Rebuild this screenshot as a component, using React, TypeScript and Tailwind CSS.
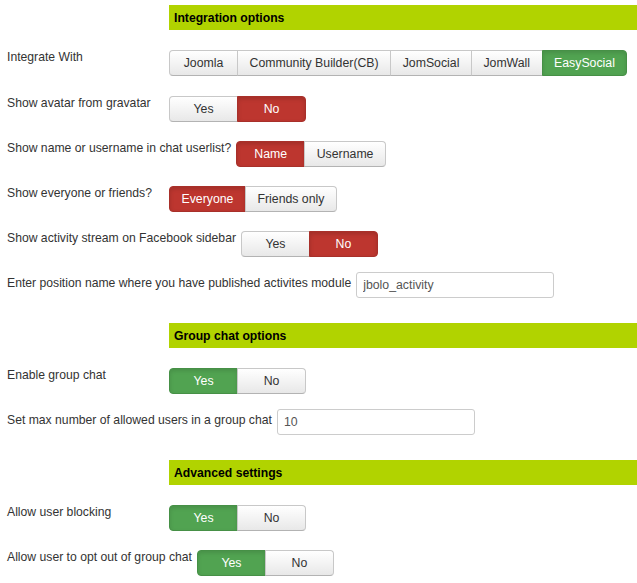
import React from 'react';

type Opt = { label: string; active?: 'red' | 'green' };

type Row =
  | { kind: 'header'; title: string }
  | { kind: 'buttons'; label: string; options: Opt[] }
  | { kind: 'input'; label: string; value: string };

const rows: Row[] = [
  { kind: 'header', title: 'Integration options' },
  {
    kind: 'buttons',
    label: 'Integrate With',
    options: [
      { label: 'Joomla' },
      { label: 'Community Builder(CB)' },
      { label: 'JomSocial' },
      { label: 'JomWall' },
      { label: 'EasySocial', active: 'green' },
    ],
  },
  { kind: 'buttons', label: 'Show avatar from gravatar', options: [{ label: 'Yes' }, { label: 'No', active: 'red' }] },
  {
    kind: 'buttons',
    label: 'Show name or username in chat userlist?',
    options: [{ label: 'Name', active: 'red' }, { label: 'Username' }],
  },
  {
    kind: 'buttons',
    label: 'Show everyone or friends?',
    options: [{ label: 'Everyone', active: 'red' }, { label: 'Friends only' }],
  },
  {
    kind: 'buttons',
    label: 'Show activity stream on Facebook sidebar',
    options: [{ label: 'Yes' }, { label: 'No', active: 'red' }],
  },
  { kind: 'input', label: 'Enter position name where you have published activites module', value: 'jbolo_activity' },
  { kind: 'header', title: 'Group chat options' },
  { kind: 'buttons', label: 'Enable group chat', options: [{ label: 'Yes', active: 'green' }, { label: 'No' }] },
  { kind: 'input', label: 'Set max number of allowed users in a group chat', value: '10' },
  { kind: 'header', title: 'Advanced settings' },
  { kind: 'buttons', label: 'Allow user blocking', options: [{ label: 'Yes', active: 'green' }, { label: 'No' }] },
  {
    kind: 'buttons',
    label: 'Allow user to opt out of group chat',
    options: [{ label: 'Yes', active: 'green' }, { label: 'No' }],
  },
];

function ButtonGroup({ options }: { options: Opt[] }) {
  return (
    <div className="flex mt-[4px] text-[12.3px]">
      {options.map((o, i) => {
        const first = i === 0;
        const last = i === options.length - 1;
        const tone =
          o.active === 'red'
            ? 'bg-[#bd362f] border-[#a8302a] text-white shadow-[inset_0_2px_4px_rgba(0,0,0,0.15)]'
            : o.active === 'green'
              ? 'bg-[#51a351] border-[#469046] text-white shadow-[inset_0_2px_4px_rgba(0,0,0,0.12)]'
              : 'bg-gradient-to-b from-white to-[#e8e8e8] border-[#c8c8c8] border-b-[#b3b3b3] text-[#333]';
        return (
          <div
            key={o.label}
            className={`h-[26px] min-w-[69px] px-[11.5px] flex items-center justify-center border whitespace-nowrap ${tone} ${
              first ? 'rounded-l-[4px]' : '-ml-px'
            } ${last ? 'rounded-r-[4px]' : ''}`}
          >
            {o.label}
          </div>
        );
      })}
    </div>
  );
}

export default function App() {
  return (
    <div className="bg-white w-[637px] h-[583px] overflow-hidden pt-[5px] pl-[7px] text-[12.2px] leading-[18px] text-[#333] font-['Liberation_Sans',Arial,sans-serif]">
      {rows.map((row, i) => {
        if (row.kind === 'header') {
          return (
            <div
              key={i}
              className={`ml-[162px] -mr-px h-[25px] flex items-center pl-[5px] bg-[#b1d300] font-bold text-black mb-4 ${
                i === 0 ? '' : 'mt-[25px]'
              }`}
            >
              {row.title}
            </div>
          );
        }
        return (
          <div key={i} className={`flex items-start ${i === 1 ? 'mb-4' : 'mb-[15px]'}`}>
            <label className="min-w-[157px] mr-[5px] pt-[2px] whitespace-nowrap">{row.label}</label>
            {row.kind === 'buttons' ? (
              <ButtonGroup options={row.options} />
            ) : (
              <input
                readOnly
                value={row.value}
                className="w-[198px] h-[26px] border border-[#cccccc] rounded-[3px] px-[6px] text-[12.3px] text-[#555] bg-white outline-none"
              />
            )}
          </div>
        );
      })}
    </div>
  );
}
